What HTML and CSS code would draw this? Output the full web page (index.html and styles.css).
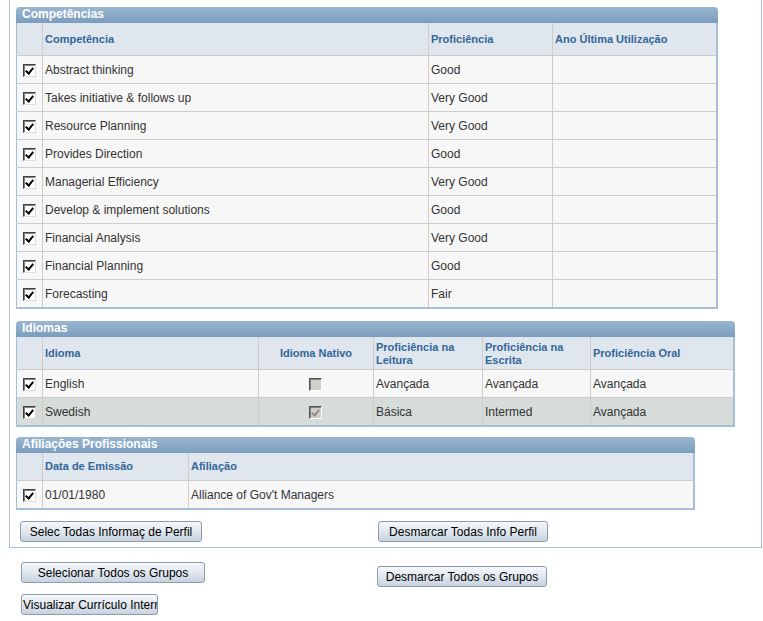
FILE: index.html
```html
<!DOCTYPE html>
<html lang="pt">
<head>
<meta charset="utf-8">
<title>Perfil</title>
<link rel="stylesheet" href="styles.css">
</head>
<body>
<div class="panel">
  <section class="grid grid-comp">
    <div class="grid-title">Competências</div>
    <table>
      <colgroup><col class="c-chk"><col style="width:386px"><col style="width:124px"><col></colgroup>
      <thead>
        <tr class="hdr h33"><th></th><th>Competência</th><th>Proficiência</th><th>Ano Última Utilização</th></tr>
      </thead>
      <tbody>
        <tr><td class="chk"><span class="cb on"></span></td><td>Abstract thinking</td><td>Good</td><td></td></tr>
        <tr><td class="chk"><span class="cb on"></span></td><td>Takes initiative &amp; follows up</td><td>Very Good</td><td></td></tr>
        <tr><td class="chk"><span class="cb on"></span></td><td>Resource Planning</td><td>Very Good</td><td></td></tr>
        <tr><td class="chk"><span class="cb on"></span></td><td>Provides Direction</td><td>Good</td><td></td></tr>
        <tr><td class="chk"><span class="cb on"></span></td><td>Managerial Efficiency</td><td>Very Good</td><td></td></tr>
        <tr><td class="chk"><span class="cb on"></span></td><td>Develop &amp; implement solutions</td><td>Good</td><td></td></tr>
        <tr><td class="chk"><span class="cb on"></span></td><td>Financial Analysis</td><td>Very Good</td><td></td></tr>
        <tr><td class="chk"><span class="cb on"></span></td><td>Financial Planning</td><td>Good</td><td></td></tr>
        <tr><td class="chk"><span class="cb on"></span></td><td>Forecasting</td><td>Fair</td><td></td></tr>
      </tbody>
    </table>
  </section>

  <section class="grid grid-lang">
    <div class="grid-title">Idiomas</div>
    <table>
      <colgroup><col class="c-chk"><col style="width:216px"><col style="width:115px"><col style="width:109px"><col style="width:108px"><col></colgroup>
      <thead>
        <tr class="hdr h33"><th></th><th>Idioma</th><th class="center">Idioma Nativo</th><th>Proficiência na Leitura</th><th>Proficiência na Escrita</th><th>Proficiência Oral</th></tr>
      </thead>
      <tbody>
        <tr><td class="chk"><span class="cb on"></span></td><td>English</td><td class="center"><span class="cb dis"></span></td><td>Avançada</td><td>Avançada</td><td>Avançada</td></tr>
        <tr class="alt"><td class="chk"><span class="cb on"></span></td><td>Swedish</td><td class="center"><span class="cb dis on"></span></td><td>Básica</td><td>Intermed</td><td>Avançada</td></tr>
      </tbody>
    </table>
  </section>

  <section class="grid grid-afil">
    <div class="grid-title">Afiliações Profissionais</div>
    <table>
      <colgroup><col class="c-chk"><col style="width:146px"><col></colgroup>
      <thead>
        <tr class="hdr h28"><th></th><th>Data de Emissão</th><th>Afiliação</th></tr>
      </thead>
      <tbody>
        <tr><td class="chk"><span class="cb on"></span></td><td>01/01/1980</td><td>Alliance of Gov't Managers</td></tr>
      </tbody>
    </table>
  </section>

  <div class="btn-row in-panel">
    <button class="btn b-sel-perfil">Selec Todas Informaç de Perfil</button>
    <button class="btn b-des-perfil">Desmarcar Todas Info Perfil</button>
  </div>
</div>

<div class="btn-row groups">
  <button class="btn b-sel-grp">Selecionar Todos os Grupos</button>
  <button class="btn b-des-grp">Desmarcar Todos os Grupos</button>
</div>
<div class="btn-row view">
  <button class="btn b-view">Visualizar Currículo Interno</button>
</div>
</body>
</html>
```

FILE: styles.css
```css
html, body {
  margin: 0;
  padding: 0;
  background: #ffffff;
  font-family: "Liberation Sans", Arial, sans-serif;
  font-size: 12px;
  color: #333333;
}

.panel {
  margin-left: 9px;
  width: 745px;
  border: 1px solid #a7bfd6;
  border-top: none;
  padding: 7px 0 5px 6px;
  box-sizing: content-box;
}

.grid { margin: 0; }
.grid-comp { width: 702px; margin-bottom: 12px; }
.grid-lang { width: 719px; margin-bottom: 10px; }
.grid-afil { width: 679px; margin-bottom: 11px; }

.grid-title {
  height: 16px;
  line-height: 15px;
  padding-left: 6px;
  color: #ffffff;
  font-weight: bold;
  font-size: 12px;
  background: linear-gradient(#9ab6d0, #7b9dbe);
  border-radius: 4px 4px 0 0;
}

table {
  width: 100%;
  border-collapse: collapse;
  table-layout: fixed;
  border-left: 1px solid #a7bfd6;
  border-right: 2px solid #a7bfd6;
  border-bottom: 2px solid #a7bfd6;
}

col.c-chk { width: 26px; }

th, td {
  border: 1px solid #cccccc;
  padding: 0 3px 0 2px;
  text-align: left;
  vertical-align: middle;
  overflow: hidden;
  white-space: nowrap;
}

th {
  background: #dfe6ed;
  color: #336699;
  font-weight: bold;
  font-size: 11px;
  line-height: 13px;
  white-space: normal;
}

tr.h33 th { height: 31px; padding-top: 1px; }
tr.h28 th { height: 27px; }

thead tr th { border-top: none; }

td {
  height: 26px;
  padding-top: 1px;
  background: #f7f7f7;
  color: #333333;
}

tr.alt td { background: #d5dcd9; }

th:first-child, td:first-child { border-left: none; }
th:last-child, td:last-child { border-right: none; }
tbody tr:last-child td { border-bottom: none; }

.center { text-align: center; }
th.center { padding-left: 3px; }
td.chk { text-align: center; padding: 0; }

.cb {
  display: inline-block;
  width: 11px;
  height: 11px;
  vertical-align: middle;
  background: #ffffff;
  border-top: 1px solid #404040;
  border-left: 1px solid #404040;
  border-right: 1px solid #dcdcdc;
  border-bottom: 1px solid #dcdcdc;
  box-shadow: inset 1px 1px 0 #808080;
  position: relative;
}

.cb.on::after {
  content: "";
  position: absolute;
  left: 3px;
  top: 1px;
  width: 3px;
  height: 6px;
  border-right: 2px solid #000000;
  border-bottom: 2px solid #000000;
  transform: rotate(40deg);
}

.cb.dis {
  background: #d4d0c8;
  border-top-color: #555555;
  border-left-color: #555555;
  border-right-color: #ffffff;
  border-bottom-color: #ffffff;
}

.cb.dis.on::after {
  border-color: #8c8c8c;
}

.btn-row {
  display: flex;
  align-items: flex-start;
}

.btn {
  font-family: "Liberation Sans", Arial, sans-serif;
  font-size: 12px;
  color: #000000;
  height: 21px;
  padding: 0;
  border: 1px solid #8c9cad;
  border-radius: 3px;
  background: linear-gradient(#f6f8fb 0%, #e3e9f0 45%, #c7d2de 100%);
  white-space: nowrap;
  overflow: hidden;
  cursor: pointer;
}

.in-panel { padding-left: 4px; }
.b-sel-perfil { width: 182px; }
.b-des-perfil { width: 170px; margin-left: 176px; }

.groups { margin-top: 14px; padding-left: 21px; }
.b-sel-grp { width: 184px; }
.b-des-grp { width: 170px; margin-left: 172px; margin-top: 4px; }

.view { margin-top: 7px; padding-left: 21px; }
.b-view { width: 137px; text-align: left; padding-left: 1px; }
```
